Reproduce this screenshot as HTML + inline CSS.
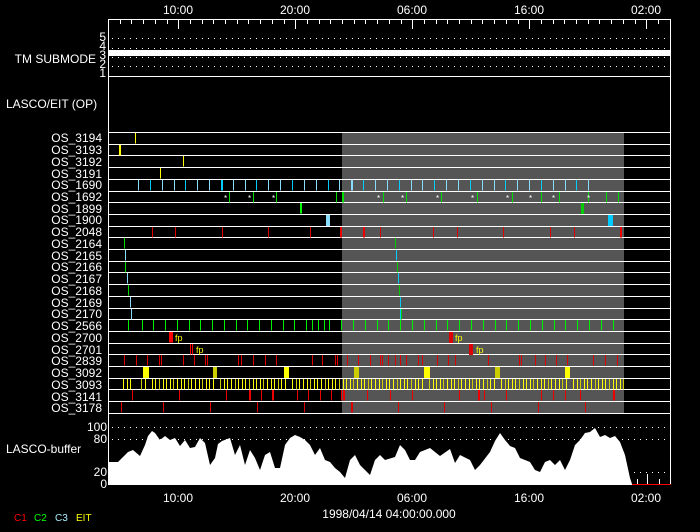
<!DOCTYPE html>
<html><head><meta charset="utf-8"><style>
html,body{margin:0;padding:0;background:#000;}
svg{display:block}
text{font-family:"Liberation Sans",sans-serif;fill:#fff;font-size:12px;}
</style></head><body>
<svg id="s" width="700" height="532" viewBox="0 0 700 532" xmlns="http://www.w3.org/2000/svg">
<rect width="700" height="532" fill="#000"/>
<rect x="342" y="132" width="282" height="281" fill="#555"/>
<g id="g"></g>
<text x="178" y="14" text-anchor="middle">10:00</text>
<text x="295" y="14" text-anchor="middle">20:00</text>
<text x="412" y="14" text-anchor="middle">06:00</text>
<text x="529" y="14" text-anchor="middle">16:00</text>
<text x="646" y="14" text-anchor="middle">02:00</text>
<text x="178" y="502" text-anchor="middle">10:00</text>
<text x="295" y="502" text-anchor="middle">20:00</text>
<text x="412" y="502" text-anchor="middle">06:00</text>
<text x="529" y="502" text-anchor="middle">16:00</text>
<text x="646" y="502" text-anchor="middle">02:00</text>
<text x="389" y="518" text-anchor="middle">1998/04/14 04:00:00.000</text>
<text x="96" y="63" text-anchor="end">TM SUBMODE</text>
<text x="6" y="108">LASCO/EIT (OP)</text>
<text x="6" y="453">LASCO-buffer</text>
<text x="106" y="41" text-anchor="end" style="font-size:12px">5</text>
<text x="106" y="50" text-anchor="end" style="font-size:12px">4</text>
<text x="106" y="59" text-anchor="end" style="font-size:12px">3</text>
<text x="106" y="68" text-anchor="end" style="font-size:12px">2</text>
<text x="106" y="77" text-anchor="end" style="font-size:12px">1</text>
<text x="107" y="431" text-anchor="end">100</text>
<text x="107" y="443" text-anchor="end">80</text>
<text x="107" y="476" text-anchor="end">20</text>
<text x="107" y="488" text-anchor="end">0</text>
<text x="14" y="521" style="fill:#f00;font-size:10px">C1</text>
<text x="34" y="521" style="fill:#0f0;font-size:10px">C2</text>
<text x="55" y="521" style="fill:#aef;font-size:10px">C3</text>
<text x="76" y="521" style="fill:#ff0;font-size:10px">EIT</text>
<g id="labels" text-anchor="end">
<text x="102" y="142">OS_3194</text><text x="102" y="154">OS_3193</text><text x="102" y="166">OS_3192</text><text x="102" y="178">OS_3191</text>
<text x="102" y="189">OS_1690</text><text x="102" y="201">OS_1692</text><text x="102" y="213">OS_1899</text><text x="102" y="224">OS_1900</text>
<text x="102" y="236">OS_2048</text><text x="102" y="248">OS_2164</text><text x="102" y="260">OS_2165</text><text x="102" y="271">OS_2166</text>
<text x="102" y="283">OS_2167</text><text x="102" y="295">OS_2168</text><text x="102" y="307">OS_2169</text><text x="102" y="318">OS_2170</text>
<text x="102" y="330">OS_2566</text><text x="102" y="342">OS_2700</text><text x="102" y="354">OS_2701</text><text x="102" y="365">OS_2839</text>
<text x="102" y="377">OS_3092</text><text x="102" y="389">OS_3093</text><text x="102" y="401">OS_3141</text><text x="102" y="412">OS_3178</text>
</g>
</svg>
<script>
var g=document.getElementById('g'),h='';
function L(x1,y1,x2,y2,c,w,extra){h+='<line x1="'+x1+'" y1="'+y1+'" x2="'+x2+'" y2="'+y2+'" stroke="'+c+'" stroke-width="'+(w||1)+'" '+(extra||'')+'/>';}
function R(x,y,w,hh,c){h+='<rect x="'+x+'" y="'+y+'" width="'+w+'" height="'+hh+'" fill="'+c+'"/>';}
L(108.5,19,108.5,485,'#fff');L(670.5,19,670.5,485,'#fff');L(108,19.5,671,19.5,'#fff');
for(var i=0;i<=48;i++){var x=Math.round(108+i*11.7)+0.5;var maj=((i+4)%10==0);L(x,19,x,maj?29:24,'#fff');}
[38,48,57,66].forEach(function(y){L(112,y+0.5,670,y+0.5,'#fff',1,'stroke-dasharray="1 5"');});
R(108,50,563,6,'#fff');
L(108,76.5,671,76.5,'#fff');
for(var i=0;i<=24;i++){var y=Math.round(132+i*11.7)+0.5;L(108,y,671,y,'#fff');}
function ry(i){return Math.round(132+i*11.7)+1;}
function mk(row,xs,c,w){var y=ry(row);xs.forEach(function(x){var xx=(w==2)?Math.round(x)+1:Math.round(x)+0.5;L(xx,y,xx,y+10.5,c,w||1);});}
mk(0,[135],'#ff0');mk(1,[119],'#ff0',2);mk(2,[183],'#ff0');mk(3,[160],'#ff0');
var a=[];for(var x=138;x<=600;x+=11.85)a.push(Math.round(x));
a.forEach(function(x,k){mk(4,[x],(k%3==1)?'#0cf':'#8df',(k==7||k==18)?2:1);});
mk(5,[229,253,276,336,383,406,441,477,512,541,559,588,606,618],'#0d0');mk(5,[342],'#0d0',2);
[227,251,275,380,404,439,474,509,532,555,590].forEach(function(x){h+='<text x="'+(x-3)+'" y="'+(ry(5)+9)+'" style="font-size:8px;fill:#fff">*</text>';});
mk(6,[300],'#0f0',2);R(581,ry(6),3,11,'#0c0');
R(326,ry(7),4,11,'#8df');R(608,ry(7),5,11,'#0cf');
mk(8,[152,175,222,268,310,380,433,457,503,550,574],'#d00');mk(8,[340,363,620],'#e00',2);
var diag=[[124,'#0d0'],[125,'#8df'],[125,'#0d0'],[127,'#8df'],[128,'#0d0'],[130,'#8df'],[131,'#8df']];
diag.forEach(function(d,k){mk(9+k,[d[0]],d[1]);mk(9+k,[395+k],k%2?'#0cf':'#0c0');});
mk(15,[400],'#0cf');
var b=[128,142,153,165,177,189,200,212,224,236,247,259,271,283,294,306,312,318,324,329,341];
for(var x=353;x<=624;x+=11.8)b.push(Math.round(x));
mk(16,b,'#0e0');
mk(17,[169,171],'#f00',2);mk(18,[190,192],'#f00',1);
R(449,ry(17),4,11,'#d00');R(469,ry(18),4,11,'#d00');
[[175,17],[196,18],[455,17],[476,18]].forEach(function(p){h+='<text x="'+p[0]+'" y="'+(ry(p[1])+9)+'" style="font-size:9px;fill:#ff0">fp</text>';});
mk(19,[124,136,147,159,161,183,194,205,207,238,241,253,265,276,312,322,335,337,347,358,370,380,382,388,395,400,406,418,422,437,448,455,488,519,521,535,545,556,567,593,605,617],'#d00');
[[143,6,'#ff0'],[213,4,'#cc0'],[284,5,'#ff0'],[354,5,'#cc0'],[424,6,'#ff0'],[495,5,'#cc0'],[565,5,'#ff0']].forEach(function(p){R(p[0],ry(20),p[1],11,p[2]);});
var c=[];for(var x=123;x<=624;x+=3.6){var gap=(x>133&&x<138)||(x>146&&x<149)||(x>214&&x<218)||(x>285&&x<289)||(x>425&&x<429)||(x>496&&x<500)||(x>566&&x<570);if(!gap)c.push(Math.round(x));}
c.forEach(function(x,k){mk(21,[x],k%4==3?'#cc0':'#ff0');});
mk(22,[132,179,226,261,297,308,320,331,341,367,390,412,459,484,506,541,553,565,580],'#e00');mk(22,[249,272,343,478,613],'#e00',2);
mk(23,[121,163,210,257,304,398,444,491,538,585],'#d00');mk(23,[351],'#d00',2);
[427,439].forEach(function(y){L(112,y+0.5,670,y+0.5,'#fff',1,'stroke-dasharray="1 5"');});
L(634,472.5,670,472.5,'#fff',1,'stroke-dasharray="1 5"');
var p=[108,462,118,462,122,458,128,452,133,450,140,456,145,445,148,436,152,431,155,433,160,440,165,436,170,440,175,438,180,446,185,440,190,448,195,447,200,438,205,443,210,465,215,458,218,444,222,441,230,438,235,455,240,445,245,465,250,450,255,458,260,470,265,455,270,452,275,468,280,468,285,445,290,438,295,435,300,437,305,440,310,445,315,455,320,448,325,460,330,462,335,468,340,472,345,478,350,460,355,455,360,465,365,470,370,475,375,460,380,455,385,460,395,457,400,445,405,450,410,460,415,460,420,452,430,448,440,456,450,449,455,463,460,455,470,460,475,470,480,465,490,452,495,441,500,433,505,440,510,446,515,448,520,458,530,462,535,470,540,472,545,462,550,460,555,465,560,460,565,470,570,460,575,445,580,440,585,433,590,432,595,428,600,437,605,435,610,438,615,436,620,442,625,455,630,478,632,484];
var d='M108 484';for(var i=0;i<p.length;i+=2)d+=' L'+p[i]+' '+p[i+1];d+=' L632 484 Z';
h+='<path d="'+d+'" fill="#fff"/>';
L(632,484.5,671,484.5,'#f00');L(637.5,484,637.5,479,'#fff');L(647.5,484,647.5,474,'#fff');L(659.5,484,659.5,479,'#fff');
L(108,484.5,632,484.5,'#fff');
g.innerHTML=h;
</script>
</body></html>
